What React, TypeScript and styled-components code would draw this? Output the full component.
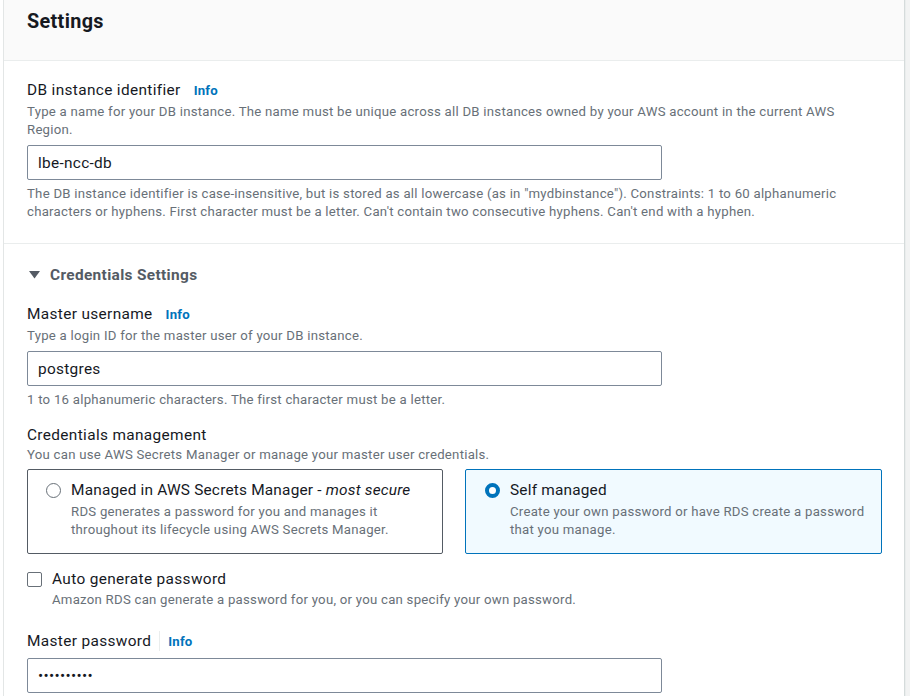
import React from "react";
import styled, { createGlobalStyle } from "styled-components";

const Global = createGlobalStyle`
  html, body { margin: 0; padding: 0; background: #ffffff; }
  body { font-family: Roboto, "Liberation Sans", Arial, sans-serif; color: #16191f; }
  * { box-sizing: border-box; }
`;

const Page = styled.div`
  display: flex;
  width: 910px;
  height: 696px;
  overflow: hidden;
  padding-left: 3px;
  background: #ffffff;
`;

const Card = styled.div`
  width: 902px;
  border-left: 1px solid #e3e6e6;
  border-right: 1px solid #d5dbdb;
  background: #ffffff;
  flex-shrink: 0;
`;

const Gutter = styled.div`
  flex: 1;
  background: #f2f3f3;
  border-left: 1px solid #eaeded;
`;

const Header = styled.div`
  height: 61px;
  background: #fafafa;
  border-bottom: 1px solid #eaeded;
  padding: 9px 23px 0;
`;

const Title = styled.h2`
  margin: 0;
  font-size: 19.8px;
  line-height: 26px;
  font-weight: 700;
  letter-spacing: 0.35px;
  color: #16191f;
`;

const Section = styled.div<{ $divider?: boolean; $pt: number; $pb: number }>`
  padding: ${(p) => p.$pt}px 23px ${(p) => p.$pb}px 23px;
  border-bottom: ${(p) => (p.$divider ? "1px solid #eaeded" : "none")};
`;

const LabelRow = styled.div<{ $mt?: number }>`
  display: flex;
  align-items: center;
  height: 20px;
  margin-top: ${(p) => p.$mt ?? 0}px;
`;

const Label = styled.span`
  font-size: 15.4px;
  line-height: 20px;
  letter-spacing: 0.35px;
  color: #16191f;
`;

const Sep = styled.span`
  width: 1px;
  height: 20px;
  background: #eaeded;
  margin: 0 8px 0 8px;
`;

const Info = styled.a<{ $gap?: boolean }>`
  font-size: 13.2px;
  font-weight: 700;
  letter-spacing: 0.2px;
  color: #0073bb;
  text-decoration: none;
  margin-left: ${(p) => (p.$gap ? "13px" : "0")};
`;

const Desc = styled.div<{ $mt?: number; $ml?: number }>`
  font-size: 13.2px;
  line-height: 18px;
  letter-spacing: 0.25px;
  color: #687078;
  margin-top: ${(p) => p.$mt ?? 0}px;
  margin-left: ${(p) => p.$ml ?? 0}px;
`;

const TextInput = styled.input<{ $mt?: number }>`
  display: block;
  width: 635px;
  height: 35px;
  margin-top: ${(p) => p.$mt ?? 0}px;
  border: 1px solid #7d8998;
  border-radius: 2px;
  padding: 0 10px;
  font-family: inherit;
  font-size: 15.4px;
  letter-spacing: 0.3px;
  color: #16191f;
  background: #ffffff;
  outline: none;
`;

const ExpandHeader = styled.div`
  display: flex;
  align-items: center;
  height: 22px;
  gap: 10px;
  padding-left: 2px;
`;

const ExpandTitle = styled.span`
  font-size: 15.4px;
  font-weight: 700;
  letter-spacing: 0.35px;
  color: #545b64;
`;

const Tiles = styled.div`
  display: grid;
  grid-template-columns: 416px 417px;
  gap: 22px;
  margin-top: 5px;
`;

const Tile = styled.div<{ $selected?: boolean }>`
  height: 85px;
  border: 1px solid ${(p) => (p.$selected ? "#0073bb" : "#545b64")};
  background: ${(p) => (p.$selected ? "#f1faff" : "#ffffff")};
  border-radius: 2px;
  padding: 10px 16px 0 ${(p) => (p.$selected ? 19 : 18)}px;
  display: flex;
  gap: 10px;
`;

const Radio = styled.span<{ $checked?: boolean }>`
  width: 15px;
  height: 15px;
  border-radius: 50%;
  flex-shrink: 0;
  margin-top: 3px;
  background: #ffffff;
  border: ${(p) => (p.$checked ? "4px solid #0073bb" : "1px solid #687078")};
`;

const TileBody = styled.div`
  display: flex;
  flex-direction: column;
`;

const TileTitle = styled.div`
  font-size: 15.4px;
  line-height: 20px;
  letter-spacing: 0.2px;
  color: #16191f;
  em { font-style: italic; }
`;

const CheckRow = styled.div`
  display: flex;
  align-items: center;
  gap: 10px;
  margin-top: 15px;
  height: 20px;
`;

const CheckBox = styled.span`
  width: 15px;
  height: 15px;
  border: 1px solid #687078;
  border-radius: 2px;
  background: #ffffff;
`;

export default function App() {
  return (
    <>
      <Global />
      <Page>
        <Card>
          <Header>
            <Title>Settings</Title>
          </Header>
          <Section $divider $pt={19} $pb={22}>
            <LabelRow>
              <Label>DB instance identifier</Label>
              <Info $gap>Info</Info>
            </LabelRow>
            <Desc $mt={3}>
              Type a name for your DB instance. The name must be unique across all DB instances owned by your AWS account in the current AWS
              <br />
              Region.
            </Desc>
            <TextInput $mt={6} readOnly value="lbe-ncc-db" />
            <Desc $mt={5}>
              The DB instance identifier is case-insensitive, but is stored as all lowercase (as in "mydbinstance"). Constraints: 1 to 60 alphanumeric
              <br />
              characters or hyphens. First character must be a letter. Can't contain two consecutive hyphens. Can't end with a hyphen.
            </Desc>
          </Section>
          <Section $pt={20} $pb={0}>
            <ExpandHeader>
              <svg width="11" height="8" viewBox="0 0 11 8">
                <path d="M0 0 L11 0 L5.5 7.5 Z" fill="#545b64" />
              </svg>
              <ExpandTitle>Credentials Settings</ExpandTitle>
            </ExpandHeader>
            <LabelRow $mt={18}>
              <Label>Master username</Label>
              <Info $gap>Info</Info>
            </LabelRow>
            <Desc $mt={3}>Type a login ID for the master user of your DB instance.</Desc>
            <TextInput $mt={6} readOnly value="postgres" />
            <Desc $mt={5}>1 to 16 alphanumeric characters. The first character must be a letter.</Desc>
            <LabelRow $mt={16}>
              <Label>Credentials management</Label>
            </LabelRow>
            <Desc $mt={1}>You can use AWS Secrets Manager or manage your master user credentials.</Desc>
            <Tiles>
              <Tile>
                <Radio />
                <TileBody>
                  <TileTitle>
                    Managed in AWS Secrets Manager - <em>most secure</em>
                  </TileTitle>
                  <Desc $mt={3}>
                    RDS generates a password for you and manages it
                    <br />
                    throughout its lifecycle using AWS Secrets Manager.
                  </Desc>
                </TileBody>
              </Tile>
              <Tile $selected>
                <Radio $checked />
                <TileBody>
                  <TileTitle>Self managed</TileTitle>
                  <Desc $mt={3}>
                    Create your own password or have RDS create a password
                    <br />
                    that you manage.
                  </Desc>
                </TileBody>
              </Tile>
            </Tiles>
            <CheckRow>
              <CheckBox />
              <Label>Auto generate password</Label>
            </CheckRow>
            <Desc $mt={2} $ml={25}>
              Amazon RDS can generate a password for you, or you can specify your own password.
            </Desc>
            <LabelRow $mt={22}>
              <Label>Master password</Label>
              <Sep />
              <Info>Info</Info>
            </LabelRow>
            <TextInput $mt={7} type="password" readOnly value="abcdefghij" />
          </Section>
        </Card>
        <Gutter />
      </Page>
    </>
  );
}
